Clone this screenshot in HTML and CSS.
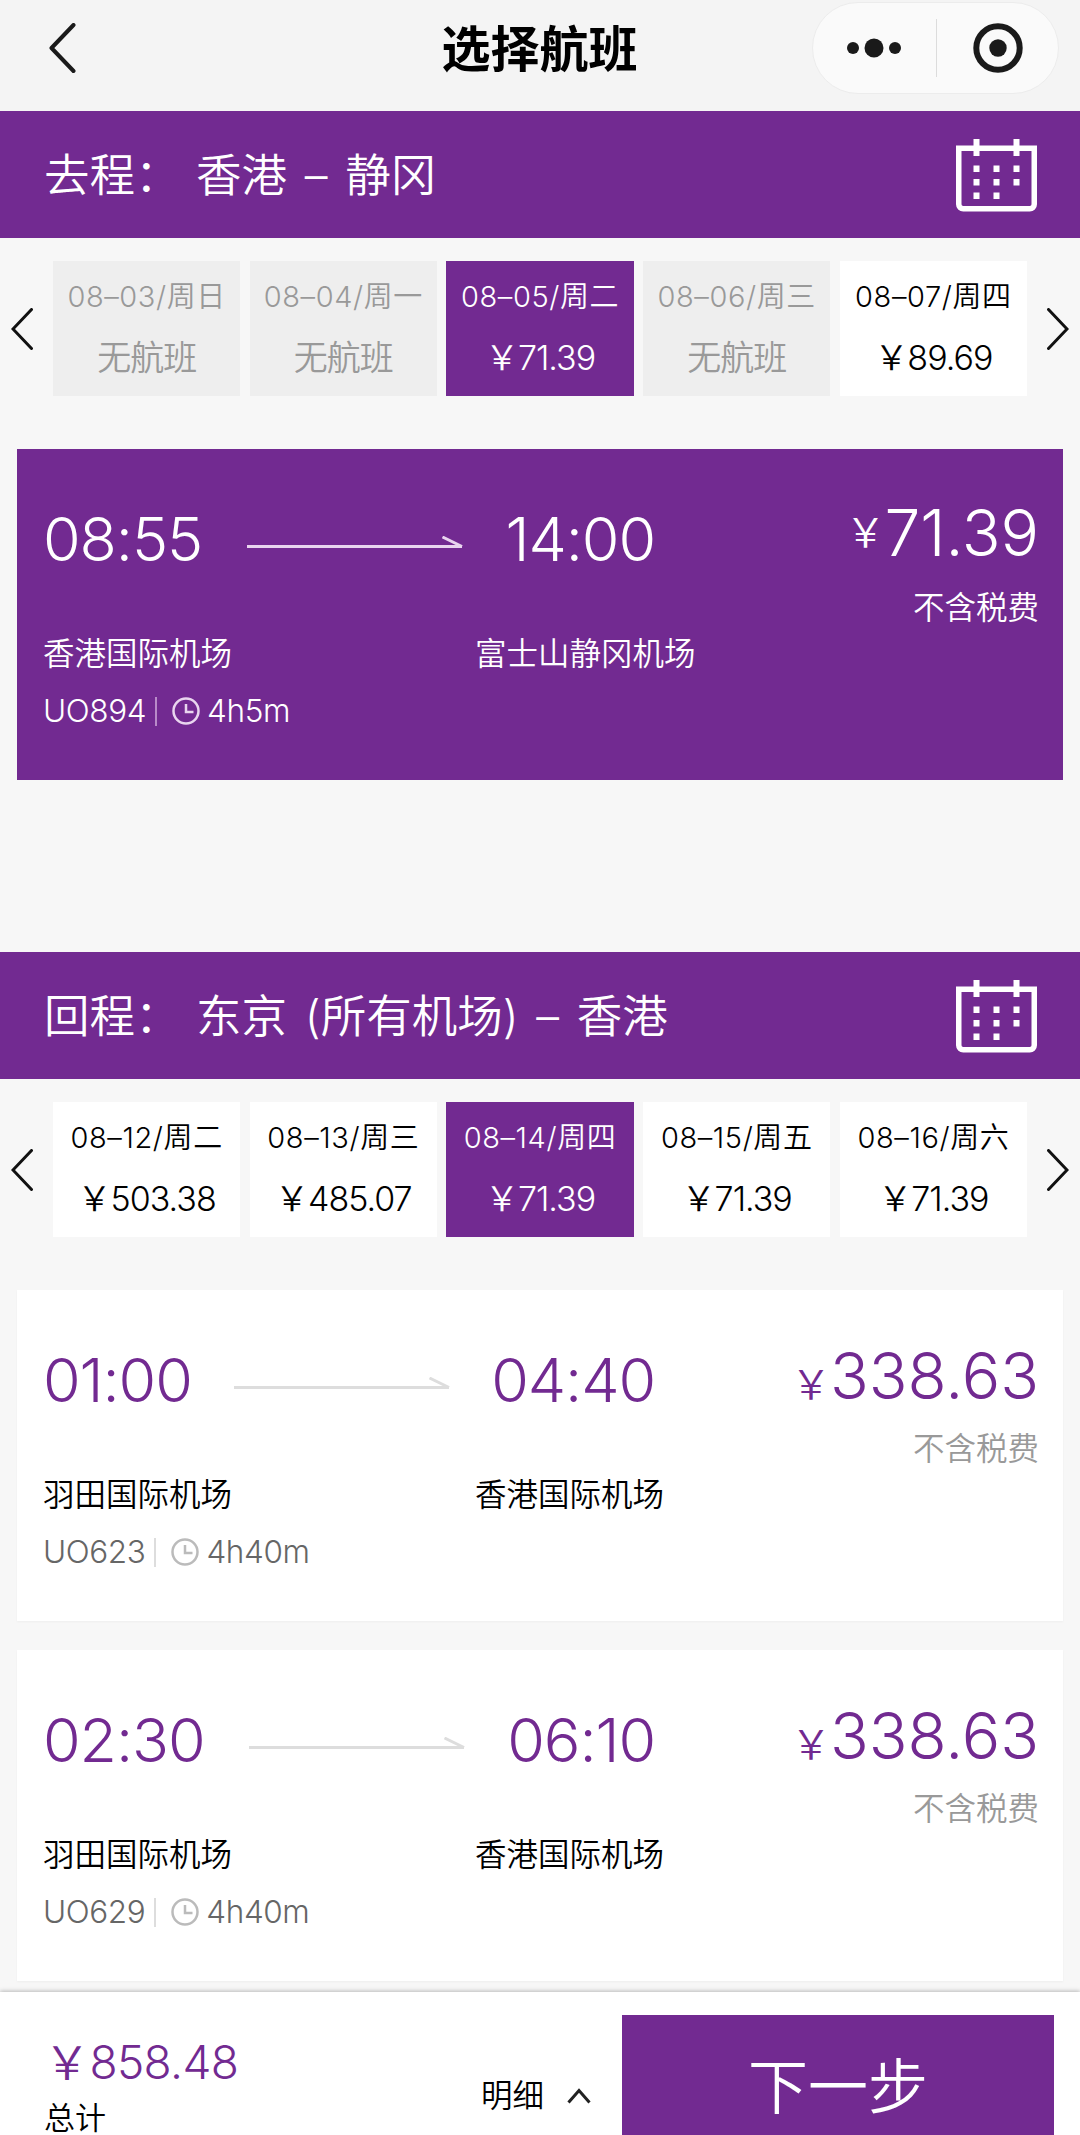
FILE: index.html
```html
<!DOCTYPE html>
<html lang="zh-CN">
<head>
  <meta charset="UTF-8">
  <title>选择航班</title>
  <meta name="viewport" content="width=device-width, initial-scale=1.0">
  <link rel="stylesheet" href="styles.css">
</head>
<body>
  <!-- shared icons -->
  <svg class="sprite" width="0" height="0">
    <symbol id="icon-left" viewBox="0 0 22 42"><path d="M20.500 1.500L2 21l18.500 19.500"/></symbol>
    <symbol id="icon-right" viewBox="0 0 22 42"><path d="M1.500 1.500L20 21 1.500 40.500"/></symbol>
    <symbol id="icon-calendar" viewBox="0 0 81 73">
      <path d="M2.750 9.250h75.500v56a4.500 4.500 0 0 1-4.500 4.500H7.250a4.500 4.500 0 0 1-4.500-4.500z" fill="none" stroke="currentColor" stroke-width="5.500"/>
      <path d="M17.500 0h6v17h-6zM57.500 0h6v17h-6zM17.500 26.500h6v6.500h-6zM37.500 26.500h6v6.500h-6zM57.500 26.500h6v6.500h-6zM17.500 40h6v6.500h-6zM37.500 40h6v6.500h-6zM57.500 40h6v6.500h-6zM17.500 53.500h6v6.500h-6zM37.500 53.500h6v6.500h-6z" fill="currentColor"/>
    </symbol>
    <symbol id="icon-arrow" viewBox="0 0 216 12">
      <path d="M0 10.500h215M195.500 1L215 10.500" fill="none" stroke="currentColor" stroke-width="3"/>
    </symbol>
    <symbol id="icon-clock" viewBox="0 0 28 28">
      <path d="M14 1.500a12.500 12.500 0 1 0 0 25 12.500 12.500 0 0 0 0-25zM14 7v8h7.500" fill="none" stroke="currentColor" stroke-width="2.500"/>
    </symbol>
  </svg>

  <div class="page">
    <header class="navbar">
      <svg class="back" viewBox="0 0 27 50"><path d="M24.500 2L2.500 25l22 23"/></svg>
      <h1>选择航班</h1>
      <div class="capsule">
        <svg class="more" viewBox="0 0 56 20">
          <circle cx="7" cy="10" r="6"/><circle cx="28" cy="10" r="9.500"/><circle cx="49" cy="10" r="6"/>
        </svg>
        <span class="capsule-line"></span>
        <svg class="target" viewBox="0 0 50 50">
          <circle class="ring" cx="25" cy="25" r="21.700"/><circle cx="25" cy="25" r="8.700"/>
        </svg>
      </div>
    </header>

    <section class="trip">
      <div class="route">
        <span class="route-label">去程：</span>
        <h2>香港 <i>–</i> 静冈</h2>
        <svg class="calendar"><use href="#icon-calendar"/></svg>
      </div>
      <div class="dates">
        <svg class="chevron"><use href="#icon-left"/></svg>
        <div class="date none"><span>08–03/周日</span><b>无航班</b></div>
        <div class="date none"><span>08–04/周一</span><b>无航班</b></div>
        <div class="date active"><span>08–05/周二</span><b>￥71.39</b></div>
        <div class="date none"><span>08–06/周三</span><b>无航班</b></div>
        <div class="date"><span>08–07/周四</span><b>￥89.69</b></div>
        <svg class="chevron"><use href="#icon-right"/></svg>
      </div>
      <div class="flights">
        <div class="flight active">
          <div class="info">
            <div class="times"><span>08:55</span><svg class="arrow"><use href="#icon-arrow"/></svg><span>14:00</span></div>
            <div class="airports"><span>香港国际机场</span><span>富士山静冈机场</span></div>
            <div class="detail"><span>UO894</span><em></em><svg class="clock"><use href="#icon-clock"/></svg><span>4h5m</span></div>
          </div>
          <div class="fare">
            <p class="price"><small>￥</small>71.39</p>
            <p class="tax">不含税费</p>
          </div>
        </div>
      </div>
    </section>

    <section class="trip">
      <div class="route">
        <span class="route-label">回程：</span>
        <h2>东京 (所有机场) <i>–</i> 香港</h2>
        <svg class="calendar"><use href="#icon-calendar"/></svg>
      </div>
      <div class="dates">
        <svg class="chevron"><use href="#icon-left"/></svg>
        <div class="date"><span>08–12/周二</span><b>￥503.38</b></div>
        <div class="date"><span>08–13/周三</span><b>￥485.07</b></div>
        <div class="date active"><span>08–14/周四</span><b>￥71.39</b></div>
        <div class="date"><span>08–15/周五</span><b>￥71.39</b></div>
        <div class="date"><span>08–16/周六</span><b>￥71.39</b></div>
        <svg class="chevron"><use href="#icon-right"/></svg>
      </div>
      <div class="flights">
        <div class="flight">
          <div class="info">
            <div class="times"><span>01:00</span><svg class="arrow"><use href="#icon-arrow"/></svg><span>04:40</span></div>
            <div class="airports"><span>羽田国际机场</span><span>香港国际机场</span></div>
            <div class="detail"><span>UO623</span><em></em><svg class="clock"><use href="#icon-clock"/></svg><span>4h40m</span></div>
          </div>
          <div class="fare">
            <p class="price"><small>￥</small>338.63</p>
            <p class="tax">不含税费</p>
          </div>
        </div>
        <div class="flight">
          <div class="info">
            <div class="times"><span>02:30</span><svg class="arrow"><use href="#icon-arrow"/></svg><span>06:10</span></div>
            <div class="airports"><span>羽田国际机场</span><span>香港国际机场</span></div>
            <div class="detail"><span>UO629</span><em></em><svg class="clock"><use href="#icon-clock"/></svg><span>4h40m</span></div>
          </div>
          <div class="fare">
            <p class="price"><small>￥</small>338.63</p>
            <p class="tax">不含税费</p>
          </div>
        </div>
      </div>
    </section>

    <footer class="checkout">
      <div class="total">
        <strong>￥858.48</strong>
        <span>总计</span>
      </div>
      <div class="more-info">
        明细
        <svg class="caret" viewBox="0 0 24 16"><path d="M1.500 14.500L12 2.500l10.500 12"/></svg>
      </div>
      <button type="button" class="next">下一步</button>
    </footer>
  </div>
</body>
</html>
```

FILE: styles.css
```css
:root {
  --purple: #722a91;
  --bg: #f7f7f7;
  --gray: #999;
}

* {
  box-sizing: border-box;
}

body {
  margin: 0;
  background: var(--bg);
  color: #000;
  font-family: Inter, "Noto Sans CJK SC", sans-serif;
  font-weight: 350;
  font-feature-settings: "calt" 0;
}

h1, h2, p {
  margin: 0;
}

svg {
  display: block;
  flex: none;
}

.sprite {
  display: none;
}

.page {
  width: 1080px;
  height: 2135px;
  overflow: hidden;
  display: flex;
  flex-direction: column;
}

/* top bar */
.navbar {
  height: 111px;
  flex: none;
  display: grid;
  grid-template-columns: 1fr auto 1fr;
  align-items: start;
  padding: 2px 21px 0 49px;
  background: #f4f4f4;
}

.back {
  width: 27px;
  height: 50px;
  margin-top: 21px;
  fill: none;
  stroke: #1a1a1a;
  stroke-width: 4;
  stroke-linecap: round;
  stroke-linejoin: round;
}

.navbar h1 {
  margin-left: -29px;
  font-size: 49px;
  font-weight: 700;
  line-height: 95px;
}

.capsule {
  justify-self: end;
  width: 247px;
  height: 92px;
  display: flex;
  align-items: center;
  padding-left: 33px;
  border: 1px solid #ececec;
  border-radius: 46px;
  background: #fafafa;
  fill: #1a1a1a;
}

.more {
  width: 56px;
  height: 20px;
}

.capsule-line {
  width: 1px;
  height: 58px;
  margin: 0 36px 0 34px;
  background: #dcdcdc;
}

.target {
  width: 50px;
  height: 50px;
}

.ring {
  fill: none;
  stroke: #1a1a1a;
  stroke-width: 6;
}

/* trip sections */
.trip {
  height: 841px;
  flex: none;
}

.trip + .trip {
  height: 1040px;
}

.route {
  height: 127px;
  display: flex;
  align-items: center;
  padding: 0 43px 0 44px;
  background: var(--purple);
  color: #fff;
  font-size: 45.500px;
}

.route-label {
  width: 152px;
  padding-bottom: 5px;
}

.route h2 {
  flex: 1;
  padding-bottom: 5px;
  font-size: inherit;
  font-weight: inherit;
  word-spacing: 5px;
}

.route i {
  font-style: normal;
}

.calendar {
  width: 81px;
  height: 73px;
  margin-top: 2px;
}

.dates {
  display: flex;
  align-items: center;
  gap: 9.600px;
  padding: 23px 11px 0;
}

.chevron {
  width: 22px;
  height: 42px;
  fill: none;
  stroke: #111;
  stroke-width: 3;
  stroke-linecap: round;
}

.chevron:first-child {
  margin-right: 10.500px;
}

.chevron:last-child {
  margin-left: 10.500px;
}

.date {
  flex: 1;
  height: 135px;
  padding-top: 15px;
  background: #fff;
  text-align: center;
  white-space: nowrap;
}

.date span {
  display: block;
  font-size: 29px;
  line-height: 42px;
  letter-spacing: 0.600px;
}

.date b {
  display: block;
  margin-top: 14px;
  font-size: 34px;
  font-weight: inherit;
  line-height: 52px;
  letter-spacing: -1px;
}

.date.none {
  background: #eee;
  color: var(--gray);
}

.date.active {
  background: var(--purple);
  color: #fff;
}

/* flight cards */
.flights {
  display: flex;
  flex-direction: column;
  gap: 29px;
  padding: 53px 17px 0;
}

.flight {
  height: 331px;
  display: flex;
  justify-content: space-between;
  padding: 0 24px 0 26px;
  background: #fff;
  box-shadow: 0 1px 2px rgba(0, 0, 0, 0.04);
}

.info {
  width: 612px;
  padding-top: 50px;
}

.times {
  display: flex;
  align-items: center;
  justify-content: space-between;
  color: var(--purple);
  font-size: 61px;
  line-height: 80px;
  letter-spacing: -1.100px;
}

.arrow {
  width: 216px;
  height: 12px;
  margin: 6px 0 0 2px;
  color: #ddd;
}

.airports {
  display: grid;
  grid-template-columns: 432px auto;
  margin-top: 51px;
  font-size: 31.500px;
  line-height: 48px;
  white-space: nowrap;
}

.detail {
  display: flex;
  align-items: center;
  margin-top: 9px;
  color: #666;
  font-size: 31.500px;
  line-height: 48px;
  letter-spacing: -0.400px;
}

.detail em {
  width: 2px;
  height: 29px;
  margin: 0 15px 0 9px;
  background: #ddd;
}

.clock {
  width: 28px;
  height: 28px;
  margin-right: 7px;
  color: #bbb;
}

.fare {
  padding-top: 46px;
  text-align: right;
}

.price {
  height: 80px;
  color: var(--purple);
  font-size: 64px;
  line-height: 80px;
}

.price small {
  margin-right: -1px;
  font-size: 40px;
  line-height: 1;
}

.tax {
  margin-top: 9px;
  color: var(--gray);
  font-size: 31.500px;
  line-height: 48px;
}

.flight.active {
  background: var(--purple);
  box-shadow: none;
}

.flight.active .times,
.flight.active .airports,
.flight.active .detail,
.flight.active .price,
.flight.active .tax {
  color: #fff;
}

.flight.active .fare {
  padding-top: 44px;
}

.flight.active .tax {
  margin-top: 11px;
}

.flight.active small {
  vertical-align: 9px;
}

.flight.active .arrow,
.flight.active .clock {
  color: #e9d5ef;
}

.flight.active em {
  background: #b98bc9;
}

/* bottom bar */
.checkout {
  position: relative;
  height: 143px;
  flex: none;
  display: flex;
  align-items: flex-start;
  padding: 0 26px 0 44px;
  background: #fff;
  box-shadow: 0 -1px 4px rgba(0, 0, 0, 0.25);
}

.total {
  width: 437px;
  padding-top: 40px;
}

.total strong {
  display: block;
  color: var(--purple);
  font-size: 46px;
  font-weight: inherit;
  line-height: 60px;
  letter-spacing: -0.600px;
}

.total span {
  display: block;
  margin-top: 10px;
  font-size: 31px;
  line-height: 31px;
}

.more-info {
  flex: 1;
  display: flex;
  align-items: center;
  gap: 23px;
  padding-top: 80px;
  font-size: 31.500px;
  line-height: 48px;
}

.caret {
  width: 24px;
  height: 16px;
  fill: none;
  stroke: #222;
  stroke-width: 3;
}

.next {
  width: 432px;
  height: 143px;
  margin-top: 23px;
  padding: 0 0 8px;
  border: none;
  background: var(--purple);
  color: #fff;
  font: inherit;
  font-size: 60px;
}
```
